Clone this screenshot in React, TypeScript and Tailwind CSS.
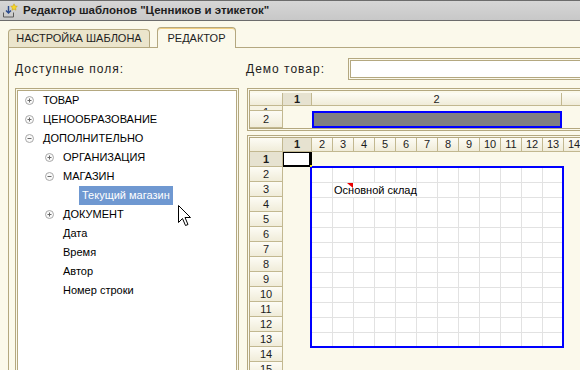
import React from "react";

type TreeNode = {
  label: string;
  level: 0 | 1 | 2;
  toggle?: "plus" | "minus";
  selected?: boolean;
};

const tree: TreeNode[] = [
  { label: "ТОВАР", level: 0, toggle: "plus" },
  { label: "ЦЕНООБРАЗОВАНИЕ", level: 0, toggle: "plus" },
  { label: "ДОПОЛНИТЕЛЬНО", level: 0, toggle: "minus" },
  { label: "ОРГАНИЗАЦИЯ", level: 1, toggle: "plus" },
  { label: "МАГАЗИН", level: 1, toggle: "minus" },
  { label: "Текущий магазин", level: 2, selected: true },
  { label: "ДОКУМЕНТ", level: 1, toggle: "plus" },
  { label: "Дата", level: 1 },
  { label: "Время", level: 1 },
  { label: "Автор", level: 1 },
  { label: "Номер строки", level: 1 },
];

const indent = ["pl-[7px]", "pl-[27px]", "pl-[47px]"];

const sheetCols = [2, 3, 4, 5, 6, 7, 8, 9, 10, 11, 12, 13, 14, 15];
const sheetRows = [1, 2, 3, 4, 5, 6, 7, 8, 9, 10, 11, 12, 13, 14, 15];

function Toggle({ open }: { open: boolean }) {
  return (
    <svg width="9" height="9" viewBox="0 0 9 9">
      <circle cx="4.5" cy="4.5" r="4" fill="#fafafa" stroke="#a8a8a8" />
      <path d="M2.5 4.5h4" stroke="#6a6a6a" />
      {!open && <path d="M4.5 2.5v4" stroke="#6a6a6a" />}
    </svg>
  );
}

function Head({
  w,
  active,
  children,
}: {
  w: string;
  active?: boolean;
  children?: React.ReactNode;
}) {
  return (
    <div
      className={`flex shrink-0 items-center justify-center border-r border-b border-[#c2b890] text-[11px] text-[#1c1c1c] ${
        active ? "bg-[#e6e2d0] font-bold" : "bg-linear-to-b from-[#fdfcf5] to-[#f0ecd9]"
      } ${w}`}
    >
      {children}
    </div>
  );
}

function TitleIcon() {
  return (
    <svg width="16" height="16" viewBox="0 0 16 16">
      <path d="M1.5 9.5v4.5h10V9.5" fill="none" stroke="#5a5a5a" />
      <path d="M6.5 3v7M4 7.5l2.5 2.5L9 7.5" fill="none" stroke="#2b4a8c" strokeWidth="1.4" />
      <path
        d="M12 0.8l1 2.2 2.3.3-1.7 1.6.4 2.3-2-1.1-2 1.1.4-2.3L8.7 3.3 11 3z"
        fill="#f6d62a"
        stroke="#c9a000"
        strokeWidth="0.5"
      />
    </svg>
  );
}

function Cursor() {
  return (
    <svg width="13" height="22" viewBox="0 0 13 22" className="absolute left-[178px] top-[205px]">
      <path
        d="M0.5 0.5V17.5L4.5 13.5L7.5 20.5L10 19.5L7 12.5H12.5Z"
        fill="#fff"
        stroke="#000"
        strokeLinejoin="round"
      />
    </svg>
  );
}

function RegionCells() {
  const cells = [];
  for (let r = 0; r < 12; r++) {
    for (let c = 0; c < 12; c++) {
      const textRow = r === 1;
      const hideRight = (textRow && c >= 1 && c <= 3) || c === 11;
      const hideBottom = r === 11;
      cells.push(
        <div
          key={`${r}-${c}`}
          className={`relative border-[#e2e2e2] ${hideRight ? "" : "border-r"} ${hideBottom ? "" : "border-b"}`}
        >
          {textRow && c === 1 && (
            <>
              <span className="absolute left-[1px] top-0 z-10 flex h-[14px] items-center whitespace-nowrap text-[11px] text-black">
                Основной склад
              </span>
              <span className="absolute right-[1px] top-0 z-20 h-0 w-0 border-t-[5px] border-l-[6px] border-t-[#e80000] border-l-transparent" />
            </>
          )}
        </div>
      );
    }
  }
  return <>{cells}</>;
}

export default function App() {
  return (
    <div className="relative flex h-[370px] w-[580px] flex-col overflow-hidden bg-[#fbf9eb] font-['Liberation_Sans',Arial,sans-serif]">
      {/* Title */}
      <div className="flex h-[21px] shrink-0 items-center gap-[5px] border-y border-[#6c6c6c] bg-linear-to-b from-[#d6d6d6] to-[#c8c8c8] pl-[2px]">
        <TitleIcon />
        <span className="text-[11.5px] font-bold text-[#1e1e1e]">
          Редактор шаблонов "Ценников и этикеток"
        </span>
      </div>

      {/* Tabs */}
      <div className="flex h-[26px] shrink-0 items-end gap-[7px] pl-[8px]">
        <div className="flex h-[18px] w-[142px] items-center justify-center rounded-t-[4px] border border-b-0 border-[#b4a880] bg-[#ebe5cc] text-[11px] text-[#1e1e1e]">
          НАСТРОЙКА ШАБЛОНА
        </div>
        <div className="relative z-10 -mb-px flex h-[21px] w-[79px] items-center justify-center rounded-t-[4px] border border-b-0 border-[#b4a880] bg-[#fbf9eb] text-[11px] text-[#1e1e1e] shadow-[inset_0_1px_0_#f1cd80]">
          РЕДАКТОР
        </div>
      </div>

      {/* Tab content */}
      <div className="ml-[8px] flex gap-[7px] border-t border-l border-[#b4a880] pt-[10px] pl-[6px]">
        {/* Left column */}
        <div className="flex w-[224px] shrink-0 flex-col">
          <div className="flex h-[22px] items-center text-[12px] tracking-[1px] text-[#1e1e1e]">
            Доступные поля:
          </div>
          <div className="mt-[8px] h-[300px] border border-[#b4a880] p-px">
            <div className="h-full border border-[#b4a880] bg-white">
              {tree.map((n) => (
                <div
                  key={n.label}
                  className={`flex h-[19px] items-center text-[11px] text-black ${indent[n.level]}`}
                >
                  <span className="flex w-[9px] shrink-0 items-center">
                    {n.toggle && <Toggle open={n.toggle === "minus"} />}
                  </span>
                  {n.selected ? (
                    <span className="ml-[5px] flex h-full items-center bg-[#6f98d1] px-[3px] text-white">
                      {n.label}
                    </span>
                  ) : (
                    <span className="ml-[9px]">{n.label}</span>
                  )}
                </div>
              ))}
            </div>
          </div>
        </div>

        {/* Right column */}
        <div className="flex w-[370px] shrink-0 flex-col">
          <div className="flex h-[22px] items-center">
            <span className="w-[102px] shrink-0 text-[12px] tracking-[1px] text-[#1e1e1e]">
              Демо товар:
            </span>
            <div className="h-full flex-1 border border-[#b4a880] p-px">
              <div className="h-full border border-[#b4a880] bg-white" />
            </div>
          </div>

          {/* Header sheet */}
          <div className="mt-[8px] ml-px border border-[#b4a880] p-px">
            <div className="border border-[#b4a880] bg-[#fbf9eb] pt-[2px]">
              <div className="flex h-[13px]">
                <Head w="w-[33px]" />
                <Head w="w-[29px]" active>
                  1
                </Head>
                <Head w="w-[250px]">2</Head>
                <Head w="w-[60px]" />
              </div>
              <div className="flex h-[5px]">
                <div className="flex w-[33px] shrink-0 justify-center overflow-hidden border-r border-b border-[#c2b890] bg-[#f6f3e3] text-[11px] leading-[13px] text-[#1c1c1c]">
                  1
                </div>
              </div>
              <div className="flex h-[17px]">
                <Head w="w-[33px]">2</Head>
                <div className="w-[29px] shrink-0" />
                <div className="w-[250px] shrink-0 border-2 border-[#0000ff] bg-[#808080]" />
              </div>
            </div>
          </div>

          {/* Body sheet */}
          <div className="mt-[4px] ml-px border border-[#b4a880] p-px">
            <div className="border border-[#b4a880] bg-[#fbf9eb]">
              <div className="flex h-[14px]">
                <Head w="w-[33px]" />
                <Head w="w-[29px]" active>
                  1
                </Head>
                {sheetCols.map((c) => (
                  <Head key={c} w="w-[21px]">
                    {c}
                  </Head>
                ))}
              </div>
              <div className="flex">
                <div className="flex flex-col">
                  {sheetRows.map((r) => (
                    <Head key={r} w="w-[33px] h-[15px]" active={r === 1}>
                      {r}
                    </Head>
                  ))}
                </div>
                <div className="flex flex-col">
                  <div className="relative z-10 flex h-[15px]">
                    <div className="relative w-[29px] shrink-0 border-t border-r-[3px] border-b-[2px] border-l border-black bg-white">
                      <span className="absolute -right-[3px] -bottom-[2px] h-[2px] w-[2px] bg-[#f4e400]" />
                    </div>
                  </div>
                  <div className="flex">
                    <div className="w-[27px] shrink-0" />
                    <div className="-mt-[1px] shrink-0 border-2 border-[#0000ff] bg-white">
                      <div className="grid grid-cols-[repeat(11,21px)_19px] grid-rows-[repeat(11,15px)_13px]">
                        <RegionCells />
                      </div>
                    </div>
                  </div>
                </div>
              </div>
            </div>
          </div>
        </div>
      </div>

      <Cursor />
    </div>
  );
}
